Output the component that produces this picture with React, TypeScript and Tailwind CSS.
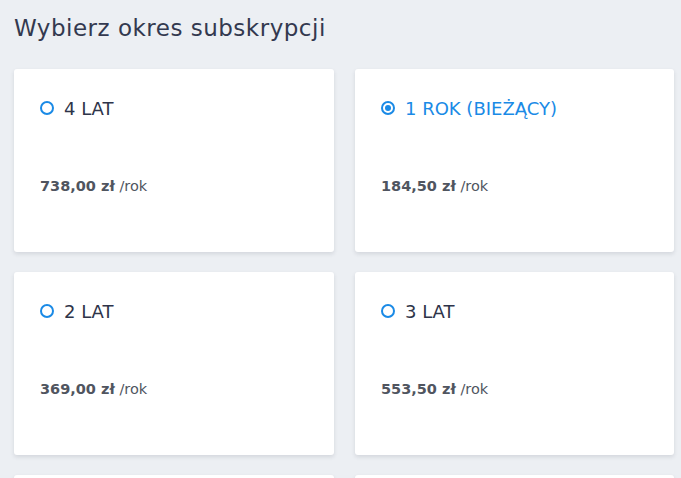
import React from 'react';

type Plan = { label: string; price: string; current?: boolean };

const plans: Plan[] = [
  { label: '4 LAT', price: '738,00 zł' },
  { label: '1 ROK (BIEŻĄCY)', price: '184,50 zł', current: true },
  { label: '2 LAT', price: '369,00 zł' },
  { label: '3 LAT', price: '553,50 zł' },
];

function Radio({ checked }: { checked?: boolean }) {
  return (
    <span className="flex items-center justify-center w-[14px] h-[14px] rounded-full border-2 border-[#1a8ae6] shrink-0">
      {checked && <span className="w-[6px] h-[6px] rounded-full bg-[#1a8ae6]" />}
    </span>
  );
}

const cardClass = 'h-[183px] bg-white rounded-[3px] shadow-[0_2px_4px_rgba(30,40,60,0.12)]';

function PlanCard({ plan }: { plan: Plan }) {
  return (
    <div className={`flex flex-col pl-[26px] pt-[28px] ${cardClass}`}>
      <div className="flex items-center gap-[10px] h-[22px]">
        <Radio checked={plan.current} />
        <span className={`text-[18px] ${plan.current ? 'text-[#1a8ae6]' : 'text-[#2e3449]'}`}>
          {plan.label}
        </span>
      </div>
      <div className="mt-[57px] text-[14.5px] text-[#50555f]">
        <span className="font-bold">{plan.price}</span> /rok
      </div>
    </div>
  );
}

export default function App() {
  return (
    <div
      className="h-[478px] bg-[#eceff3] overflow-hidden"
      style={{ fontFamily: '"DejaVu Sans", "Noto Sans", sans-serif' }}
    >
      <h1 className="pl-[14px] pt-[12px] text-[23px] leading-[32px] tracking-[0.5px] text-[#33394f]">
        Wybierz okres subskrypcji
      </h1>
      <div className="grid grid-cols-[320px_319px] gap-x-[21px] gap-y-[20px] pl-[14px] mt-[25px]">
        {plans.map((p) => (
          <PlanCard key={p.label} plan={p} />
        ))}
        <div className={cardClass} />
        <div className={cardClass} />
      </div>
    </div>
  );
}
